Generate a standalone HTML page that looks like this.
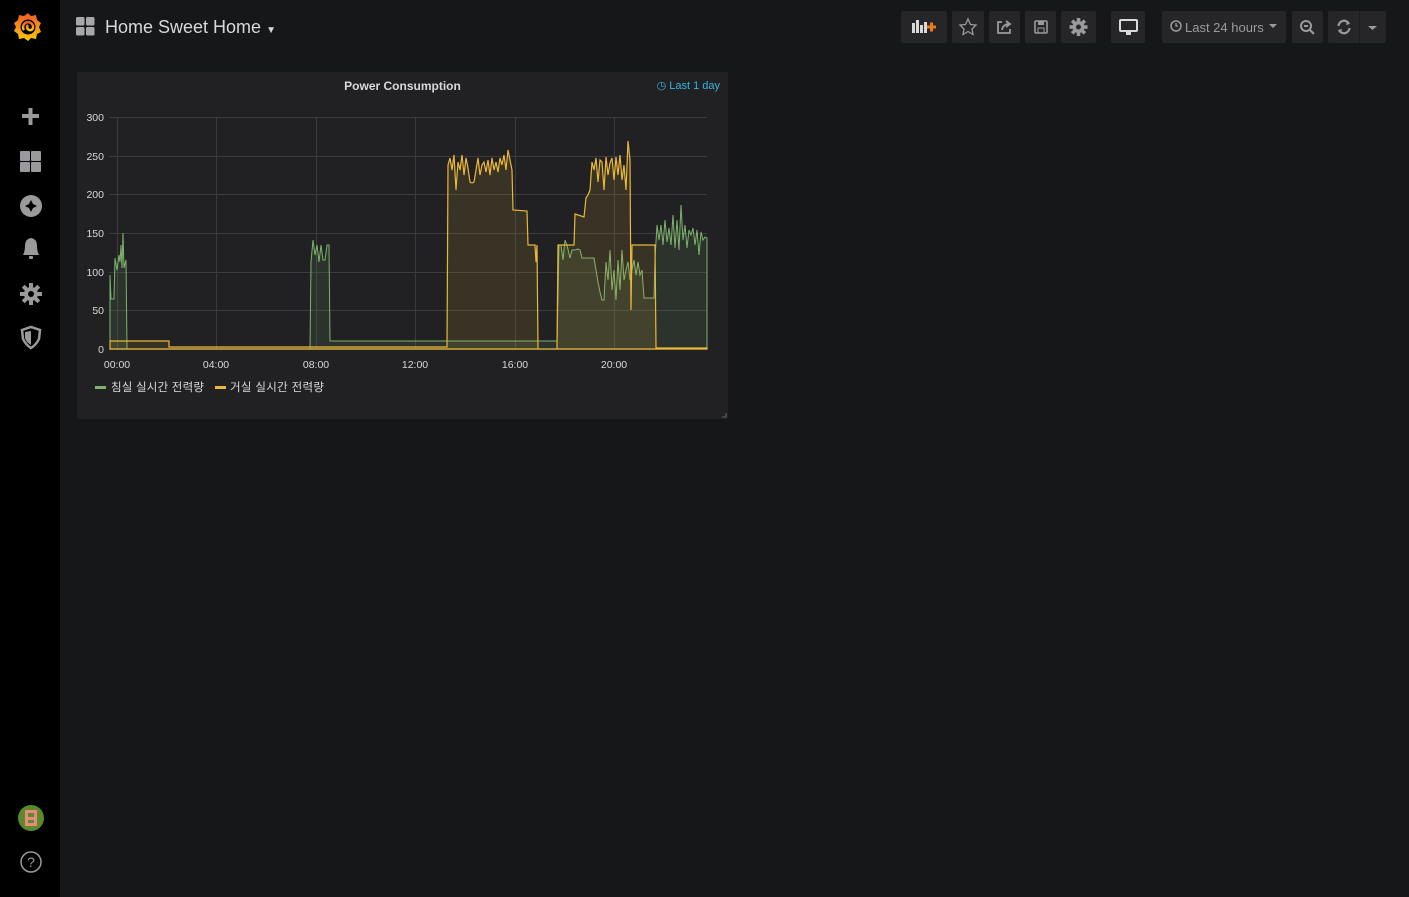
<!DOCTYPE html>
<html><head><meta charset="utf-8"><style>
*{margin:0;padding:0;box-sizing:border-box}
body{width:1409px;height:897px;background:#161719;font-family:"Liberation Sans","Noto Sans CJK KR",sans-serif;position:relative;overflow:hidden;color:#d8d9da}
.side{position:absolute;left:0;top:0;width:60px;height:897px;background:#000}
.btn{position:absolute;top:11px;height:32px;background:#262628;border-radius:2px}
.panel{position:absolute;left:77px;top:72px;width:651px;height:347px;background:#212124}
</style></head><body>
<div class="side">
<svg width="60" height="897" style="position:absolute;left:0;top:0">
<defs><linearGradient id="g" x1="0" y1="1" x2="0" y2="0"><stop offset="0" stop-color="#fbca0a"/><stop offset="1" stop-color="#f05a28"/></linearGradient></defs>
<g transform="translate(28,27)">
<path d="M0,-14 L3,-11 L8,-12 L9,-7 L13,-4 L11,0 L13,5 L9,7 L8,12 L3,11 L0,14 L-4,11 L-9,12 L-10,7 L-14,4 L-12,0 L-14,-4 L-10,-7 L-9,-12 L-4,-11Z" fill="url(#g)"/>
<circle r="7.5" fill="#000"/>
<path d="M-4,3 A5,5 0 1 1 5,1 A3,3 0 1 1 0,-2" stroke="url(#g)" stroke-width="2.5" fill="none"/>
</g>
<g fill="#9a9a9c">
<rect x="22" y="114" width="17" height="4"/><rect x="28.5" y="108" width="4" height="17"/>
<rect x="20" y="151" width="10" height="10" rx="1"/><rect x="31" y="151" width="10" height="10" rx="1"/><rect x="20" y="162" width="10" height="10" rx="1"/><rect x="31" y="162" width="10" height="10" rx="1"/>
<circle cx="31" cy="206" r="11"/>
<path d="M31,200 L33,204 L37,206 L33,208 L31,212 L29,208 L25,206 L29,204Z" fill="#000"/>
<path d="M23,255 Q25,251 25,246 Q25,239 31,238 Q37,239 37,246 Q37,251 39,255Z"/><rect x="29" y="256" width="4" height="3" rx="1"/>
<circle cx="31" cy="294" r="7"/>
<g transform="translate(31,294)"><rect x="-2" y="-11" width="4" height="22"/><rect x="-11" y="-2" width="22" height="4"/><rect x="-2" y="-11" width="4" height="22" transform="rotate(45)"/><rect x="-2" y="-11" width="4" height="22" transform="rotate(-45)"/></g>
<circle cx="31" cy="294" r="3" fill="#000"/>
<path d="M22,330 L31,327 L40,330 L39,339 Q36,345 31,348 Q26,345 23,339Z" fill="none" stroke="#9a9a9c" stroke-width="2.5"/>
<path d="M31,331 L31,345 Q26,342 25,338 L25,332Z"/>
</g>
<circle cx="31" cy="818" r="13" fill="#5a8a2a"/>
<rect x="25" y="810" width="12" height="16" fill="#e88a80"/>
<rect x="28" y="813" width="6" height="4" fill="#5a8a2a"/><rect x="28" y="820" width="6" height="3" fill="#5a8a2a"/>
<circle cx="31" cy="862" r="10" fill="none" stroke="#9a9a9c" stroke-width="1.5"/>
<text x="31" y="867" font-size="14" fill="#9a9a9c" text-anchor="middle" font-family="Liberation Sans">?</text>
</svg>
</div>
<svg width="20" height="20" style="position:absolute;left:76px;top:17px"><g fill="#a8a8aa"><rect x="0" y="0" width="8.5" height="8.5" rx="1.5"/><rect x="10" y="0" width="8.5" height="8.5" rx="1.5"/><rect x="0" y="10" width="8.5" height="8.5" rx="1.5"/><rect x="10" y="10" width="8.5" height="8.5" rx="1.5"/></g></svg>
<div style="position:absolute;left:105px;top:17px;font-size:18px;color:#d8d9da">Home Sweet Home <span style="font-size:10px">▼</span></div>

<div class="btn" style="left:901px;width:46px"></div>
<div class="btn" style="left:952px;width:32px"></div>
<div class="btn" style="left:989px;width:31px"></div>
<div class="btn" style="left:1025px;width:31px"></div>
<div class="btn" style="left:1061px;width:35px"></div>
<div class="btn" style="left:1111px;width:34px"></div>
<div class="btn" style="left:1162px;width:124px"></div>
<div class="btn" style="left:1292px;width:31px"></div>
<div class="btn" style="left:1328px;width:58px"></div>
<div style="position:absolute;left:1359px;top:11px;width:1px;height:32px;background:#1c1c1e"></div>
<svg width="1409" height="60" style="position:absolute;left:0;top:0">
<g fill="#d8d9da"><rect x="912" y="23" width="3" height="10"/><rect x="916" y="20" width="3" height="13"/><rect x="920" y="25" width="3" height="8"/><rect x="924" y="22" width="3" height="11"/></g>
<path d="M927,27h9M931.5,22.5v9" stroke="#eb7b18" stroke-width="3"/>
<path d="M968,19 L970.5,24.5 L976,25 L972,29 L973,34.5 L968,31.5 L963,34.5 L964,29 L960,25 L965.5,24.5Z" fill="none" stroke="#9a9a9c" stroke-width="1.3"/>
<path d="M1002,22h-4v11h12v-4" fill="none" stroke="#9a9a9c" stroke-width="1.8"/><path d="M1002,30 Q1003,24 1009,24 M1006,21 L1010,24 L1006,27" fill="none" stroke="#9a9a9c" stroke-width="1.8"/>
<rect x="1035" y="21" width="12" height="12" rx="1" fill="none" stroke="#9a9a9c" stroke-width="1.6"/><rect x="1038" y="21" width="6" height="4" fill="#9a9a9c"/><rect x="1038" y="28" width="6" height="5" fill="none" stroke="#9a9a9c"/>
<g transform="translate(1078.5,27)" fill="#9a9a9c"><circle r="6"/><rect x="-1.8" y="-9" width="3.6" height="18"/><rect x="-9" y="-1.8" width="18" height="3.6"/><rect x="-1.8" y="-9" width="3.6" height="18" transform="rotate(45)"/><rect x="-1.8" y="-9" width="3.6" height="18" transform="rotate(-45)"/><circle r="2.5" fill="#262628"/></g>
<rect x="1120" y="20" width="17" height="11" rx="1" fill="none" stroke="#d8d9da" stroke-width="2"/><rect x="1126" y="32" width="5" height="3" fill="#d8d9da"/>
<circle cx="1176" cy="26" r="5" fill="none" stroke="#9a9a9c" stroke-width="1.5"/><path d="M1176,23v3h2" stroke="#9a9a9c" stroke-width="1.3" fill="none"/>
<text x="1185" y="32" font-size="13" fill="#9a9a9c" font-family="Liberation Sans">Last 24 hours</text>
<path d="M1269,24h8l-4,4z" fill="#9a9a9c"/>
<circle cx="1306" cy="26" r="5" fill="none" stroke="#9a9a9c" stroke-width="2"/><path d="M1304,26h4M1310,30l4,4" stroke="#9a9a9c" stroke-width="2"/>
<path d="M1338.5,26 A5.5,5.5 0 0 1 1349,24 M1349.5,28 A5.5,5.5 0 0 1 1339,30" fill="none" stroke="#9a9a9c" stroke-width="2.2"/><path d="M1347,21l3,3l-4,1zM1341,33l-3,-3l4,-1z" fill="#9a9a9c"/>
<path d="M1368,26h9l-4.5,4z" fill="#9a9a9c"/>
</svg>

<div class="panel"></div>
<div style="position:absolute;left:77px;top:79px;width:651px;text-align:center;font-size:12px;font-weight:bold;color:#d8d9da">Power Consumption</div>
<div style="position:absolute;right:689px;top:79px;font-size:11px;color:#33b5e5">◷ Last 1 day</div>
<svg width="1409" height="430" style="position:absolute;left:0;top:0" font-family="Liberation Sans" font-size="10.5" fill="#d8d9da">
<g stroke="#3c3c3e" stroke-width="1">
<path d="M109,117.5H707M109,156.5H707M109,194.5H707M109,233.5H707M109,272.5H707M109,310.5H707M109,349.5H707"/>
<path d="M117.5,117V349M216.5,117V349M316.5,117V349M415.5,117V349M515.5,117V349M614.5,117V349"/>
</g>
<g text-anchor="end"><text x="104" y="121">300</text><text x="104" y="160">250</text><text x="104" y="198">200</text><text x="104" y="237">150</text><text x="104" y="276">100</text><text x="104" y="314">50</text><text x="104" y="353">0</text></g>
<g text-anchor="middle"><text x="117" y="368">00:00</text><text x="216" y="368">04:00</text><text x="316" y="368">08:00</text><text x="415" y="368">12:00</text><text x="515" y="368">16:00</text><text x="614" y="368">20:00</text></g>
<path fill="rgba(126,178,109,0.12)" stroke="#7eb26d" stroke-width="1" d="M110,275 L111,299 L114,299 L115,258 L117,270 L119,255 L120,262 L121,245 L122,268 L123,233 L124,268 L126,260 L127,349 L310,349 L311,262 L313,240 L315,255 L317,245 L319,262 L321,245 L323,260 L325,260 L327,245 L329,245 L330,341 L557,341 L559,245 L561,245 L563,260 L565,240 L567,245 L570,258 L572,250 L575,250 L578,249 L580,250 L582,258 L594,258 L596,270 L598,282 L600,292 L602,300 L604,300 L606,262 L608,280 L610,250 L612,290 L614,270 L616,300 L618,260 L620,290 L622,250 L624,280 L626,270 L628,262 L630,280 L632,270 L634,260 L636,275 L638,262 L640,275 L642,270 L644,298 L654,298 L655,258 L657,225 L659,240 L661,225 L663,245 L665,220 L667,242 L669,228 L671,245 L673,215 L675,248 L677,220 L679,250 L681,205 L683,240 L685,225 L687,248 L689,230 L691,235 L693,228 L695,245 L697,230 L699,255 L701,232 L703,240 L705,237 L707,238 L707,349 L110,349Z"/>
<path fill="rgba(234,184,57,0.12)" stroke="#eab839" stroke-width="1.2" d="M110,341 L169,341 L169,347 L447,347 L448,165 L450,158 L452,170 L454,155 L456,190 L458,162 L460,170 L462,155 L464,175 L466,158 L468,168 L470,182 L472,183 L474,182 L476,170 L478,158 L480,175 L482,165 L484,162 L486,172 L488,160 L490,175 L492,158 L494,170 L496,162 L498,172 L500,158 L502,165 L504,155 L506,170 L508,150 L510,160 L512,170 L513,210 L527,211 L528,245 L535,245 L536,262 L537,245 L538,349 L557,349 L558,245 L574,245 L575,214 L584,217 L586,198 L588,195 L590,190 L592,162 L594,170 L596,158 L598,182 L600,160 L602,162 L604,190 L606,157 L608,175 L610,163 L612,158 L614,180 L616,157 L618,175 L620,155 L622,180 L624,165 L626,190 L628,141 L630,160 L631,310 L632,245 L655,245 L656,348 L707,348 L707,349 L110,349Z"/>
<rect x="95" y="386" width="11" height="3" fill="#7eb26d"/><text x="111" y="391" font-size="11.5" textLength="93">침실 실시간 전력량</text>
<rect x="215" y="386" width="11" height="3" fill="#eab839"/><text x="230" y="391" font-size="11.5" textLength="94">거실 실시간 전력량</text>
<path d="M726,413v4h-4" stroke="#666" stroke-width="1" fill="none"/>
</svg>
</body></html>
